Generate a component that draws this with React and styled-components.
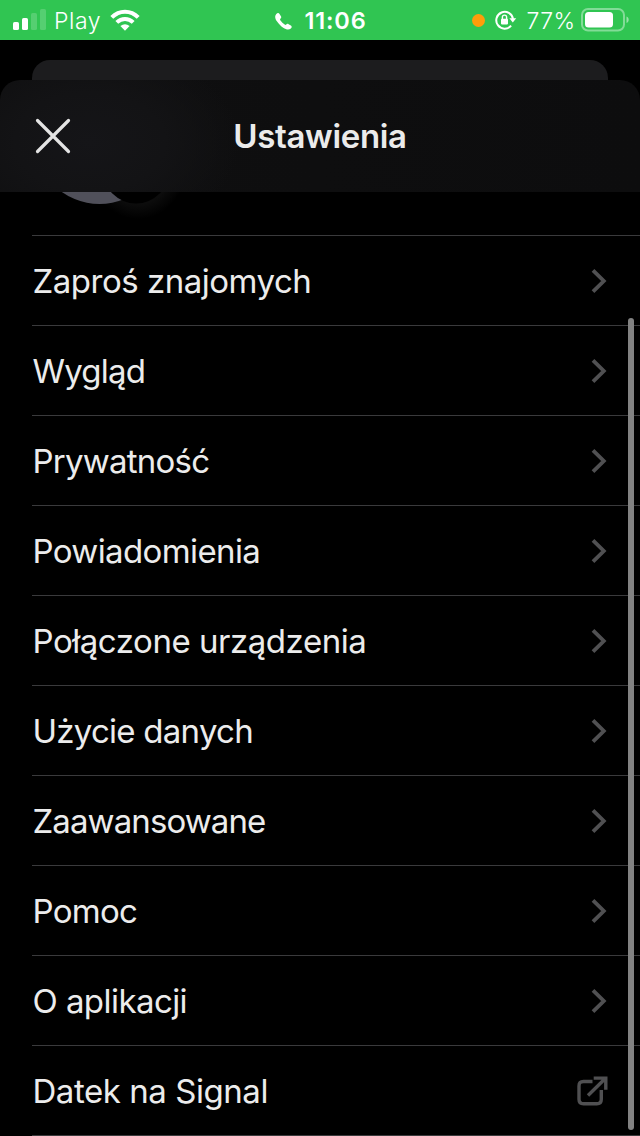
import React from "react";
import styled, { createGlobalStyle } from "styled-components";

const GlobalStyle = createGlobalStyle`
  * { box-sizing: border-box; }
  body {
    margin: 0;
    background: #000;
    font-family: Inter, "Liberation Sans", sans-serif;
  }
`;

const Screen = styled.main`
  display: flex;
  flex-direction: column;
  width: 640px;
  height: 1136px;
  overflow: hidden;
  background: #000;
  position: relative;
`;

const StatusBar = styled.header`
  display: grid;
  grid-template-columns: 1fr auto 1fr;
  align-items: center;
  height: 40px;
  flex: none;
  padding: 0 11px 0 13px;
  background: #30c552;
  color: #fff;
`;

const StatusGroup = styled.div`
  display: flex;
  align-items: center;
  justify-content: ${(p) => p.$justify || "flex-start"};
  height: 40px;
`;

const StatusText = styled.span`
  font-size: ${(p) => p.$size || 23}px;
  font-weight: ${(p) => p.$weight || 300};
  letter-spacing: ${(p) => p.$spacing || 0}px;
  line-height: 28px;
  margin: ${(p) => p.$margin || "0"};
  padding-top: 2px;
  white-space: nowrap;
`;

const StatusIcon = styled.svg`
  display: block;
  flex: none;
  margin: ${(p) => p.$margin || "0"};
`;

const RecordingDot = styled.i`
  width: 13px;
  height: 13px;
  border-radius: 50%;
  background: #ff9d0a;
  margin-right: 10px;
`;

const PreviousCard = styled.div`
  flex: none;
  height: 20px;
  margin: 20px 32px 0;
  border-radius: 18px 18px 0 0;
  background: #1c1c1e;
`;

const TitleBar = styled.div`
  flex: none;
  display: grid;
  grid-template-columns: 106px 1fr 106px;
  align-items: center;
  height: 112px;
  border-radius: 20px 20px 0 0;
  background:
    radial-gradient(ellipse 150px 100px at 90px 62px, #151518 0%, #131315 50%, transparent 100%),
    linear-gradient(90deg, #0f0f10, #0d0d0e);
`;

const CloseButton = styled.button`
  display: flex;
  border: 0;
  padding: 0;
  margin-left: 35px;
  width: 36px;
  background: none;
`;

const Title = styled.h1`
  margin: 0;
  text-align: center;
  font-size: 33px;
  font-weight: 600;
  line-height: 40px;
  letter-spacing: -0.35px;
  color: #ebebeb;
`;

const ProfileEdge = styled.svg`
  display: block;
  flex: none;
`;

const List = styled.ul`
  list-style: none;
  margin: 0;
  padding: 0 0 0 32px;
  flex: none;
`;

const Row = styled.li`
  display: flex;
  align-items: center;
  justify-content: space-between;
  height: 90px;
  padding: 0 ${(p) => (p.$external ? 32 : 33)}px 0 0.5px;
  border-top: 1px solid #3a3a3c;
`;

const EndRule = styled.li`
  height: 1px;
  background: #3a3a3c;
`;

const Label = styled.span`
  font-size: 33px;
  font-weight: 400;
  line-height: 44px;
  letter-spacing: ${(p) => p.$spacing}px;
  color: #ececec;
  white-space: nowrap;
`;

const ScrollThumb = styled.div`
  position: absolute;
  right: 6px;
  top: 318px;
  width: 6px;
  height: 812px;
  border-radius: 3px;
  background: #828282;
`;

const Chevron = () => (
  <svg width="16" height="26" viewBox="0 0 16 26" fill="none">
    <path d="M2 2.3L12.8 13L2 23.7" stroke="#505052" strokeWidth="3.8" />
  </svg>
);

const External = () => (
  <svg width="31" height="31" viewBox="0 0 31 31" fill="none" stroke="#505052" strokeWidth="3.4">
    <path d="M15.5 6.5H6.5Q2 6.5 2 11V24.2Q2 28.7 6.5 28.7H19.8Q24.3 28.7 24.3 24.2V15" />
    <path d="M16.7 3.1H28.8V14.8M28.5 3.3L11 20.5" />
  </svg>
);

const items = [
  ["Zaproś znajomych", -0.48],
  ["Wygląd", -0.8],
  ["Prywatność", -0.76],
  ["Powiadomienia", -0.62],
  ["Połączone urządzenia", -0.46],
  ["Użycie danych", -0.74],
  ["Zaawansowane", -0.9],
  ["Pomoc", -0.7],
  ["O aplikacji", -0.56],
  ["Datek na Signal", -0.45, true],
];

export default function App() {
  return (
    <Screen>
      <GlobalStyle />
      <StatusBar>
        <StatusGroup>
          <StatusIcon width="34" height="22" viewBox="0 0 34 22" fill="#fff">
            <rect x="0" y="13" width="6" height="8" rx="1.6" />
            <rect x="9" y="9" width="6" height="12" rx="1.6" />
            <rect x="18" y="4" width="6" height="17" rx="1.6" opacity=".18" />
            <rect x="27" y="0" width="6" height="21" rx="1.6" opacity=".18" />
          </StatusIcon>
          <StatusText $spacing={0.6} $margin="0 9px 0 7px">Play</StatusText>
          <StatusIcon width="30" height="22" viewBox="0 0 30 22" fill="none" stroke="#fff" strokeWidth="4">
            <path d="M1.8 8.4C9.2 .7 20.8 .7 28.2 8.4" />
            <path d="M6.8 13.4C11.6 8.7 18.4 8.7 23.2 13.4" />
            <path d="M10.4 17.1Q15 13.2 19.6 17.1L15 21.7Z" fill="#fff" stroke="none" />
          </StatusIcon>
        </StatusGroup>
        <StatusGroup>
          <StatusIcon width="17" height="17" viewBox="0 0 18 18" fill="#fff" $margin="2px 0 0">
            <path d="M1.2 1.2C2.5-.2 4-.2 4.8 1L6.3 3.5C6.9 4.6 6.6 5.3 5.7 6.2C5.2 6.8 5.3 7.3 5.8 8C7.1 9.8 8.5 11.2 10.2 12.3C10.9 12.7 11.4 12.7 11.9 12.2C12.8 11.3 13.5 11.2 14.4 11.8L16.8 13.3C17.9 14 18 15.2 16.8 16.4C15 18.1 12.2 18 8.7 15.7C6.2 14 3.7 11.4 2 8.8C-.1 5.6-.4 2.9 1.2 1.2Z" />
          </StatusIcon>
          <StatusText $weight={600} $size={23.5} $spacing={0.85} $margin="0 0 0 12px">11:06</StatusText>
        </StatusGroup>
        <StatusGroup $justify="flex-end">
          <RecordingDot />
          <StatusIcon width="22" height="20" viewBox="0 0 22 20" fill="none" stroke="#fff" strokeWidth="2">
            <path d="M16.1 15.7A8.4 8.4 0 1 1 18 9" />
            <path d="M14.4 8.3H21.2L17.8 12.6Z" fill="#fff" stroke="none" />
            <rect x="6" y="8.8" width="7" height="5.6" rx=".8" fill="#fff" stroke="none" />
            <path d="M7.4 9V7.2A2.1 2.1 0 0 1 11.6 7.2V9" strokeWidth="1.4" />
          </StatusIcon>
          <StatusText $spacing={0.4} $margin="0 5.5px 0 10px">77%</StatusText>
          <StatusIcon width="48" height="24" viewBox="0 0 48 24" fill="none">
            <rect x="1" y="1" width="42" height="21.5" rx="6" stroke="#fff" strokeOpacity=".4" strokeWidth="2" />
            <rect x="4" y="4" width="28" height="15.5" rx="3.5" fill="#fff" />
            <path d="M45.5 8.5C48.4 9.6 48.4 14 45.5 15Z" fill="#fff" opacity=".5" />
          </StatusIcon>
        </StatusGroup>
      </StatusBar>
      <PreviousCard />
      <TitleBar>
        <CloseButton aria-label="Zamknij">
          <svg width="36" height="36" viewBox="0 0 36 36" fill="none">
            <path d="M2.5 2.5L33.5 33.5M33.5 2.5L2.5 33.5" stroke="#e4e4e4" strokeWidth="3.2" strokeLinecap="round" />
          </svg>
        </CloseButton>
        <Title>Ustawienia</Title>
      </TitleBar>
      <ProfileEdge width="640" height="43" viewBox="0 0 640 43">
        <defs>
          <radialGradient id="badgeGlow" gradientUnits="userSpaceOnUse" cx="138" cy="-19" r="46">
            <stop offset="0.68" stopColor="#0c0c0c" />
            <stop offset="1" stopColor="#000" />
          </radialGradient>
        </defs>
        <circle cx="138" cy="-19" r="46" fill="url(#badgeGlow)" />
        <circle cx="99.5" cy="-53" r="65" fill="#50505a" />
        <circle cx="136" cy="-21.5" r="33" fill="#000" />
      </ProfileEdge>
      <List>
        {items.map(([name, spacing, external]) => (
          <Row key={name} $external={external}>
            <Label $spacing={spacing}>{name}</Label>
            {external ? <External /> : <Chevron />}
          </Row>
        ))}
        <EndRule />
      </List>
      <ScrollThumb />
    </Screen>
  );
}
